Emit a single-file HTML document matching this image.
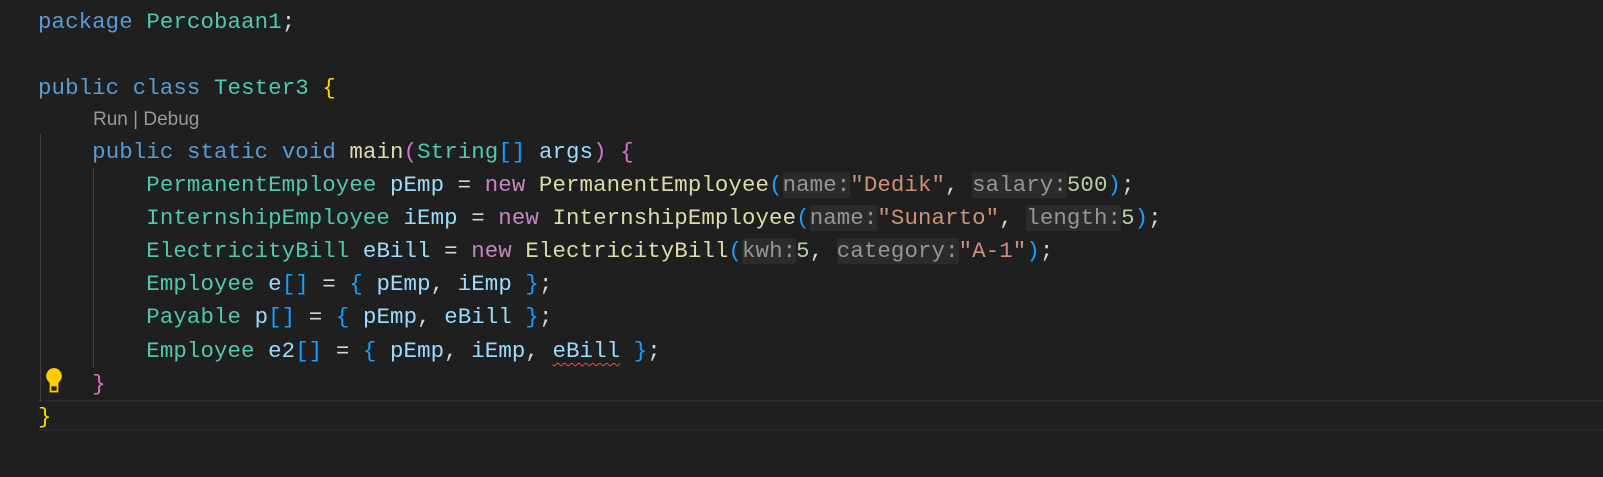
<!DOCTYPE html>
<html><head><style>
html,body{margin:0;padding:0;background:#1f1f1f;width:1603px;height:477px;overflow:hidden}
.l{position:absolute;left:38px;height:33px;line-height:33px;font-family:"Liberation Mono",monospace;font-size:22.4px;letter-spacing:0.1px;white-space:pre;color:#d4d4d4}
.k{color:#569cd6}.t{color:#4ec9b0}.v{color:#9cdcfe}.f{color:#dcdcaa}.s{color:#ce9178}.n{color:#b5cea8}.w{color:#c586c0}
.b1{color:#ffd700}.b2{color:#da70d6}.b3{color:#179fff}
.h{background:#2b2b2b;color:#969696;border-radius:3px}
.g{position:absolute;width:1px;background:#404040}
.sq{text-decoration:underline wavy #f14c4c;text-underline-offset:5px;text-decoration-thickness:1px}
</style></head><body>
<div style="position:absolute;left:38px;top:400px;width:1565px;height:31px;border-top:2px solid #282828;border-bottom:2px solid #282828;box-sizing:border-box"></div>
<div class="g" style="left:40px;top:134px;height:268px"></div>
<div class="g" style="left:93px;top:168px;height:200px"></div>
<div class="l" style="top:6px"><span class="k">package</span> <span class="t">Percobaan1</span>;</div>
<div class="l" style="top:72px"><span class="k">public</span> <span class="k">class</span> <span class="t">Tester3</span> <span class="b1">{</span></div>
<div class="l" style="top:103px;left:93px;font-family:'Liberation Sans',sans-serif;font-size:19px;letter-spacing:0;color:#999">Run | Debug</div>
<div class="l" style="top:136px">    <span class="k">public</span> <span class="k">static</span> <span class="k">void</span> <span class="f">main</span><span class="b2">(</span><span class="t">String</span><span class="b3">[]</span> <span class="v">args</span><span class="b2">)</span> <span class="b2">{</span></div>
<div class="l" style="top:169px">        <span class="t">PermanentEmployee</span> <span class="v">pEmp</span> = <span class="w">new</span> <span class="f">PermanentEmployee</span><span class="b3">(</span><span class="h">name:</span><span class="s">"Dedik"</span>, <span class="h">salary:</span><span class="n">500</span><span class="b3">)</span>;</div>
<div class="l" style="top:202px">        <span class="t">InternshipEmployee</span> <span class="v">iEmp</span> = <span class="w">new</span> <span class="f">InternshipEmployee</span><span class="b3">(</span><span class="h">name:</span><span class="s">"Sunarto"</span>, <span class="h">length:</span><span class="n">5</span><span class="b3">)</span>;</div>
<div class="l" style="top:235px">        <span class="t">ElectricityBill</span> <span class="v">eBill</span> = <span class="w">new</span> <span class="f">ElectricityBill</span><span class="b3">(</span><span class="h">kwh:</span><span class="n">5</span>, <span class="h">category:</span><span class="s">"A-1"</span><span class="b3">)</span>;</div>
<div class="l" style="top:268px">        <span class="t">Employee</span> <span class="v">e</span><span class="b3">[]</span> = <span class="b3">{</span> <span class="v">pEmp</span>, <span class="v">iEmp</span> <span class="b3">}</span>;</div>
<div class="l" style="top:301px">        <span class="t">Payable</span> <span class="v">p</span><span class="b3">[]</span> = <span class="b3">{</span> <span class="v">pEmp</span>, <span class="v">eBill</span> <span class="b3">}</span>;</div>
<div class="l" style="top:335px">        <span class="t">Employee</span> <span class="v">e2</span><span class="b3">[]</span> = <span class="b3">{</span> <span class="v">pEmp</span>, <span class="v">iEmp</span>, <span class="v sq">eBill</span> <span class="b3">}</span>;</div>
<div class="l" style="top:368px">    <span class="b2">}</span></div>
<svg style="position:absolute;left:43px;top:367px" width="22" height="27" viewBox="0 0 22 27"><path d="M11 1a8 8 0 0 0-6 13c1.2 1.3 1.8 2.5 1.8 4h8.4c0-1.5.6-2.7 1.8-4a8 8 0 0 0-6-13z" fill="#ffcc00"/><rect x="7.5" y="18.5" width="7" height="6" fill="none" stroke="#ffcc00" stroke-width="1.8"/></svg>
<div class="l" style="top:401px"><span class="b1">}</span></div>
</body></html>
